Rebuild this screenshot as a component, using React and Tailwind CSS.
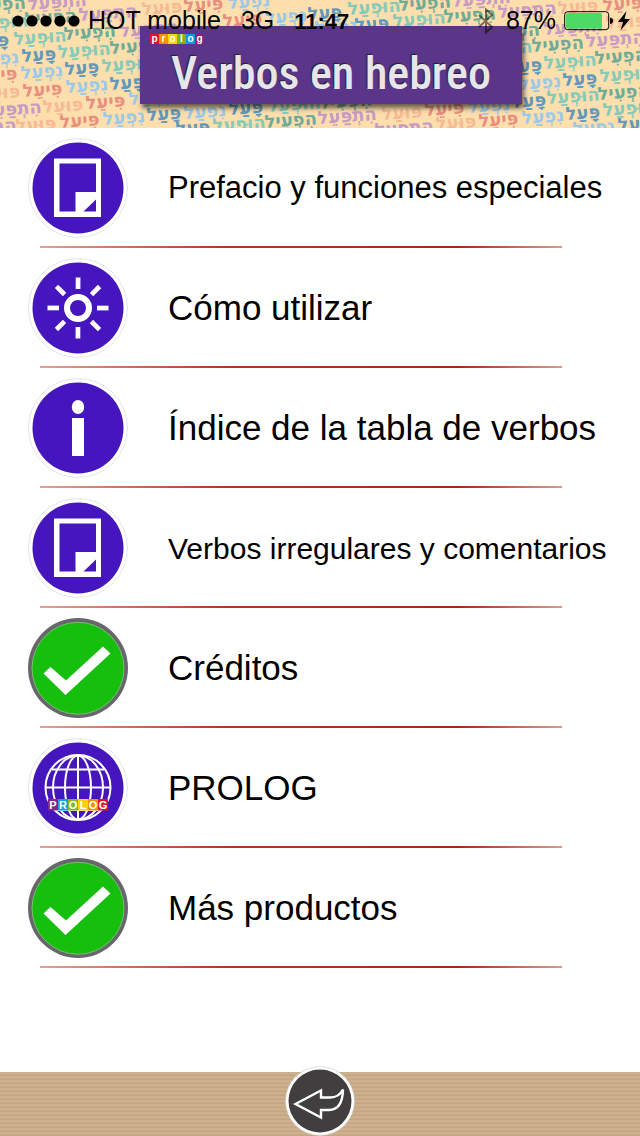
import React from 'react';

const WORDS = {
  paal: { text: 'פָּעַל', className: 'fill-[#6299bb]' },
  nifal: { text: 'נִפְעַל', className: 'fill-[#9dc9e6]' },
  piel: { text: 'פִּיעֵל', className: 'fill-[#e8907f]' },
  pual: { text: 'פּוּעַל', className: 'fill-[#f6bb95]' },
  hitpael: { text: 'הִתְפַּעֵל', className: 'fill-[#c79bc4]' },
  hifil: { text: 'הִפְעִיל', className: 'fill-[#6fab95]' },
  hufal: { text: 'הוּפְעַל', className: 'fill-[#86cab8]' },
};

// [verb pattern, left edge, vertical middle]
const PATTERN = [
  ['hifil', -26, 5], ['hitpael', 28, 3], ['pual', 142, 8], ['piel', 184, 5], ['nifal', 228, 2],
  ['hufal', 348, 8], ['hifil', 399, 4], ['hitpael', 452, 0], ['hitpael', 498, 11], ['pual', 558, 7], ['piel', 603, 4],
  ['hufal', -24, 23], ['hifil', 25, 18], ['hitpael', 79, 14], ['piel', 223, 20], ['nifal', 265, 17], ['paal', 308, 13],
  ['nifal', 315, 27], ['paal', 355, 24], ['hufal', 393, 20], ['hifil', 444, 16], ['pual', 606, 22],
  ['paal', -25, 41], ['hufal', 14, 38], ['hifil', 64, 33], ['hitpael', 120, 30], ['hifil', 488, 32], ['hitpael', 544, 28],
  ['nifal', -23, 59], ['paal', 22, 55], ['hufal', 58, 51], ['hifil', 110, 47], ['hufal', 480, 49], ['hifil', 532, 45], ['hitpael', 586, 40],
  ['piel', -22, 75], ['nifal', 21, 72], ['paal', 65, 68], ['hufal', 102, 65], ['paal', 508, 66], ['hufal', 544, 62], ['hifil', 595, 57],
  ['pual', -20, 93], ['piel', 23, 90], ['nifal', 66, 86], ['paal', 110, 83], ['nifal', 519, 83], ['paal', 563, 79], ['hufal', 600, 75],
  ['hitpael', -17, 110], ['pual', 43, 106], ['piel', 86, 102], ['nifal', 129, 98], ['paal', 512, 101], ['hufal', 547, 97], ['hifil', 598, 93],
  ['hitpael', -42, 128], ['pual', 16, 125], ['piel', 60, 121], ['nifal', 103, 118], ['paal', 147, 114], ['nifal', 184, 112],
  ['paal', 229, 108], ['hufal', 268, 105], ['hifil', 320, 102],
  ['paal', 176, 128], ['hufal', 213, 125], ['hifil', 265, 121], ['hitpael', 318, 117], ['pual', 382, 113], ['piel', 425, 109], ['nifal', 468, 106],
  ['hitpael', 375, 129], ['pual', 436, 123], ['piel', 479, 120], ['nifal', 522, 117], ['paal', 566, 113], ['hufal', 603, 109],
  ['nifal', 573, 128], ['paal', 618, 124],
];

function VerbPattern() {
  return (
    <svg aria-hidden="true" className="absolute inset-0 h-full w-full font-['DejaVu_Sans','Open_Sans',sans-serif] text-[18px] font-bold">
      {PATTERN.map(([word, x, y]) => (
        <text
          key={`${word}-${x}-${y}`}
          className={WORDS[word].className}
          transform={`translate(${x} ${y + 7}) rotate(-4)`}
        >
          {WORDS[word].text}
        </text>
      ))}
    </svg>
  );
}

function StatusBar() {
  return (
    <div className="absolute inset-x-0 top-0 flex h-[42px] items-center pr-2 pl-3 text-[25px] text-black">
      <svg viewBox="0 0 68 12" className="h-3 w-[68px]" aria-label="Signal">
        {[6, 20, 34, 48, 62].map((cx) => (
          <circle key={cx} cx={cx} cy="6" r="5.6" />
        ))}
      </svg>
      <span className="ml-2">HOT mobile</span>
      <span className="ml-5">3G</span>
      <span className="ml-5 text-[22px] font-bold">11:47</span>
      <div className="ml-auto flex items-center">
        <svg viewBox="0 0 16 26" className="mr-3 h-[26px] w-4 fill-none stroke-black/50 stroke-2" aria-label="Bluetooth">
          <path d="M1 7 L14 19 L8 24.500 V1.500 L14 7 L1 19" />
        </svg>
        <span>87%</span>
        <svg viewBox="0 0 68 20" className="ml-2 h-5 w-[68px]" aria-label="Battery charging">
          <rect x="0.700" y="0.700" width="44" height="18" rx="3" className="fill-none stroke-black stroke-1" />
          <rect x="2" y="2" width="36" height="15.500" rx="1.500" className="fill-[#4cd964]" />
          <path d="M46 6.500 Q49 7 49 9.700 Q49 12.500 46 13 Z" />
          <path d="M62.500 0 L54 11 H59 L56.500 19.500 L66 8 H60.500 Z" />
        </svg>
      </div>
    </div>
  );
}

const LOGO = [
  ['p', 'bg-[#e3122c]'],
  ['r', 'bg-[#f39200]'],
  ['o', 'bg-[#fcd500]'],
  ['l', 'bg-[#7ab51d]'],
  ['o', 'bg-[#009fe3]'],
  ['g', 'bg-[#86217e]'],
];

function Header() {
  return (
    <header className="relative flex h-32 shrink-0 items-start justify-center overflow-hidden bg-[#fddfae] pt-[26px] pl-[22px]">
      <VerbPattern />
      <div className="relative h-[78px] w-[382px] bg-[#5a358a] shadow-[2px_4px_5px_rgba(0,0,0,0.6)]">
        <div className="flex pt-2 pl-[10px]" aria-label="prolog">
          {LOGO.map(([letter, color], i) => (
            <span
              key={i}
              className={`flex h-[10px] w-[9px] items-center justify-center text-[10px] leading-none font-bold text-white ${color}`}
            >
              {letter}
            </span>
          ))}
        </div>
        <h1 className="text-center font-['Roboto_Condensed',Roboto,sans-serif] text-[46px] leading-[58px] font-medium whitespace-nowrap text-[#e6e6e8] [text-shadow:-1px_-1px_1px_#222]">
          Verbos en hebreo
        </h1>
      </div>
      <StatusBar />
    </header>
  );
}

function Disc({ children }) {
  return (
    <svg viewBox="0 0 100 100" className="h-[100px] w-[100px] shrink-0" aria-hidden="true">
      <circle cx="50" cy="50" r="49.500" fill="#fff" stroke="#d9d9d9" strokeWidth="0.700" />
      <circle cx="50" cy="50" r="45.500" fill="#4515bd" />
      {children}
    </svg>
  );
}

function PageIcon() {
  return (
    <Disc>
      <path fill="#fff" fillRule="evenodd" d="M26 20.500 H73 V79 H26 Z M31.500 25.500 V73.500 H47.500 V54 H68 V25.500 Z" />
      <path fill="#4515bd" d="M55.500 73.500 L68 61.500 V73.500 Z" />
    </Disc>
  );
}

function SunIcon() {
  return (
    <Disc>
      <circle cx="50" cy="50" r="11" fill="none" stroke="#fff" strokeWidth="6" />
      {[0, 45, 90, 135, 180, 225, 270, 315].map((angle) => (
        <rect key={angle} x="47.700" y="19.500" width="4.700" height="11.500" fill="#fff" transform={`rotate(${angle} 50 50)`} />
      ))}
    </Disc>
  );
}

function InfoIcon() {
  return (
    <Disc>
      <ellipse cx="50" cy="29" rx="6.200" ry="7" fill="#fff" />
      <rect x="44" y="40" width="12" height="38" fill="#fff" />
    </Disc>
  );
}

function CheckIcon() {
  return (
    <svg viewBox="0 0 100 100" className="h-[100px] w-[100px] shrink-0" aria-hidden="true">
      <circle cx="50" cy="50" r="50" fill="#67666b" />
      <circle cx="50" cy="50.300" r="46" fill="#16be0d" stroke="#8fc08c" strokeWidth="0.800" />
      <path fill="#fff" d="M15.500 55.500 L22.500 49 L38 62.500 L75 28.500 L82.500 35.500 L37.500 77 Z" />
    </svg>
  );
}

const GLOBE_LOGO = [
  ['P', '#7d2a8c'],
  ['R', '#0aa3e0'],
  ['O', '#80ba27'],
  ['L', '#fbd106'],
  ['O', '#f39200'],
  ['G', '#e3122c'],
];

function GlobeIcon() {
  return (
    <Disc>
      <g fill="none" stroke="#fff" strokeWidth="2">
        <circle cx="50" cy="49.500" r="32.500" />
        <ellipse cx="50" cy="49.500" rx="25" ry="32" />
        <ellipse cx="50" cy="49.500" rx="13" ry="32" />
        <path d="M50 17 V82 M17.500 49.500 H82.500 M24 31.500 H76 M26 72 H74" />
      </g>
      {GLOBE_LOGO.map(([letter, color], i) => (
        <g key={i}>
          <rect x={20 + i * 10} y="61" width="10" height="11.500" fill={color} />
          <text x={25 + i * 10} y="70.500" textAnchor="middle" className="fill-white text-[11px] font-bold">
            {letter}
          </text>
        </g>
      ))}
    </Disc>
  );
}

const items = [
  { label: 'Prefacio y funciones especiales', Icon: PageIcon, size: 'text-[31px]' },
  { label: 'Cómo utilizar', Icon: SunIcon, size: 'text-[35px]' },
  { label: 'Índice de la tabla de verbos', Icon: InfoIcon, size: 'text-[35px]' },
  { label: 'Verbos irregulares y comentarios', Icon: PageIcon, size: 'text-[30px]' },
  { label: 'Créditos', Icon: CheckIcon, size: 'text-[35px]' },
  { label: 'PROLOG', Icon: GlobeIcon, size: 'text-[35px]' },
  { label: 'Más productos', Icon: CheckIcon, size: 'text-[35px]' },
];

export default function App() {
  return (
    <div className="flex min-h-screen flex-col bg-white font-['Liberation_Sans',Arial,sans-serif] text-black">
      <Header />

      <main className="flex-1">
        <ul>
          {items.map(({ label, Icon, size }) => (
            <li key={label}>
              <button type="button" className="flex h-[118px] w-full items-center gap-10 pt-[2px] pl-7 text-left">
                <Icon />
                <span className={`whitespace-nowrap ${size}`}>{label}</span>
              </button>
              <div className="mr-[78px] ml-10 h-[2px] bg-[linear-gradient(to_right,#e5a193,#b5391f_35%,#a82a10_80%,#d99a8e)]" />
            </li>
          ))}
        </ul>
      </main>

      <footer className="flex h-16 shrink-0 justify-center bg-[#c9ab88] bg-[repeating-linear-gradient(to_bottom,#cdb08e_0px,#cdb08e_2px,#c4a682_3px,#c4a682_4px)]">
        <button type="button" aria-label="Volver" className="relative -top-[6px] h-[70px] w-[70px]">
          <svg viewBox="0 0 70 70" className="h-[70px] w-[70px]">
            <circle cx="35" cy="35" r="34.500" fill="#fff" stroke="#d0c8c0" strokeWidth="0.600" />
            <circle cx="35" cy="35" r="31.500" fill="#413e3f" />
            <path
              d="M10.500 38 L36 24.500 V31.500 H45 Q54 31.500 58 23.500 Q57.500 44 44 44 H36 V51.500 Z"
              fill="none"
              stroke="#fff"
              strokeWidth="2.400"
            />
          </svg>
        </button>
      </footer>
    </div>
  );
}
